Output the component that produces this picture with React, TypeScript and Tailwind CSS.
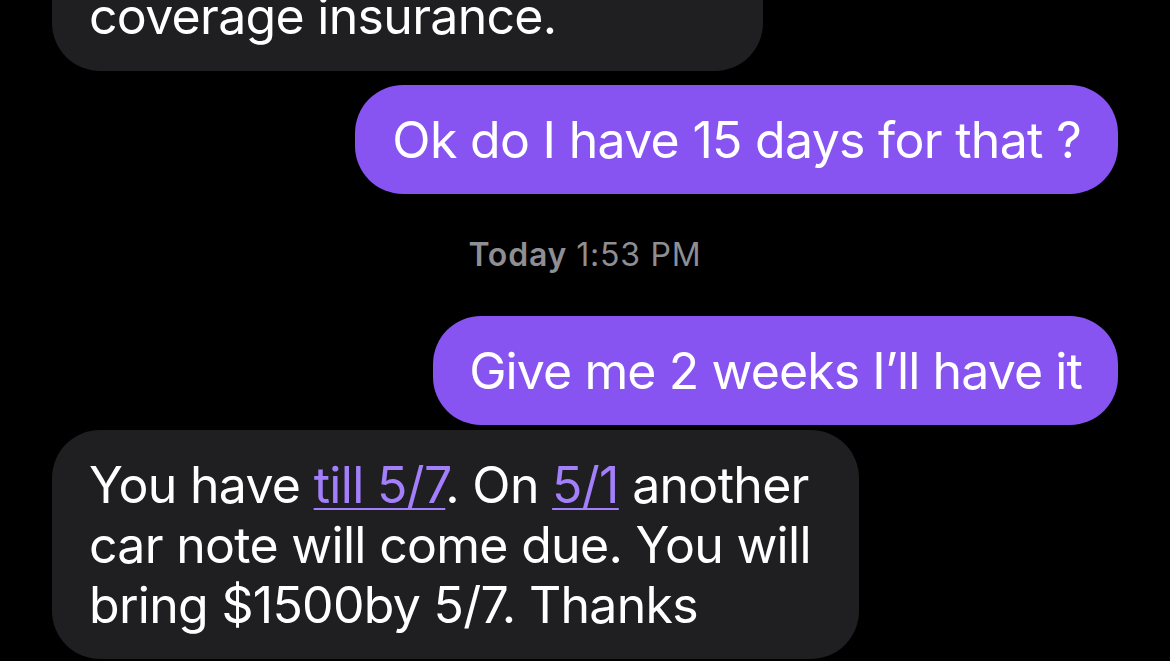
import React from "react";

const font = { fontFamily: "Inter, 'Noto Sans', sans-serif" };

export default function App() {
  return (
    <div
      className="w-[1170px] h-[661px] overflow-hidden bg-black text-white flex flex-col"
      style={font}
    >
      {/* clipped top received bubble */}
      <div className="ml-[52px] mt-[-98px] w-[711px] rounded-[48px] bg-[#1f1f21] pl-[37px] pr-[48px] pt-[84px] pb-[25px] text-[50px] leading-[60px] tracking-[-0.7px]">
        coverage insurance.
      </div>

      <div className="mt-[14px] self-end mr-[52px] rounded-[48px] bg-[#8754f1] px-[37px] py-[24.5px] text-[50px] leading-[60px] tracking-[-0.7px] whitespace-nowrap">
        Ok do I have 15 days for that ?
      </div>

      <div className="h-[122px] flex items-center justify-center text-[32px] text-[#8e8e93] tracking-[0.8px]">
        <span className="font-semibold">Today</span>
        <span className="ml-[9px]">1:53 PM</span>
      </div>

      <div className="self-end mr-[52px] rounded-[48px] bg-[#8754f1] pl-[36px] pr-[36px] py-[24.5px] text-[50px] leading-[60px] tracking-[-0.9px] whitespace-nowrap">
        Give me 2 weeks I’ll have it
      </div>

      <div className="mt-[5px] self-start ml-[52px] rounded-[48px] bg-[#1f1f21] pl-[37px] pr-[48px] py-[24.5px] text-[50px] leading-[60px] tracking-[-0.7px] whitespace-nowrap">
        You have{" "}
        <span className="text-[#a37ffc] underline decoration-[2px] underline-offset-[5px]">
          till 5/7
        </span>
        . On{" "}
        <span className="text-[#a37ffc] underline decoration-[2px] underline-offset-[5px]">
          5/1
        </span>{" "}
        another
        <br />
        car note will come due. You will
        <br />
        bring $1500by 5/7. Thanks
      </div>
    </div>
  );
}
